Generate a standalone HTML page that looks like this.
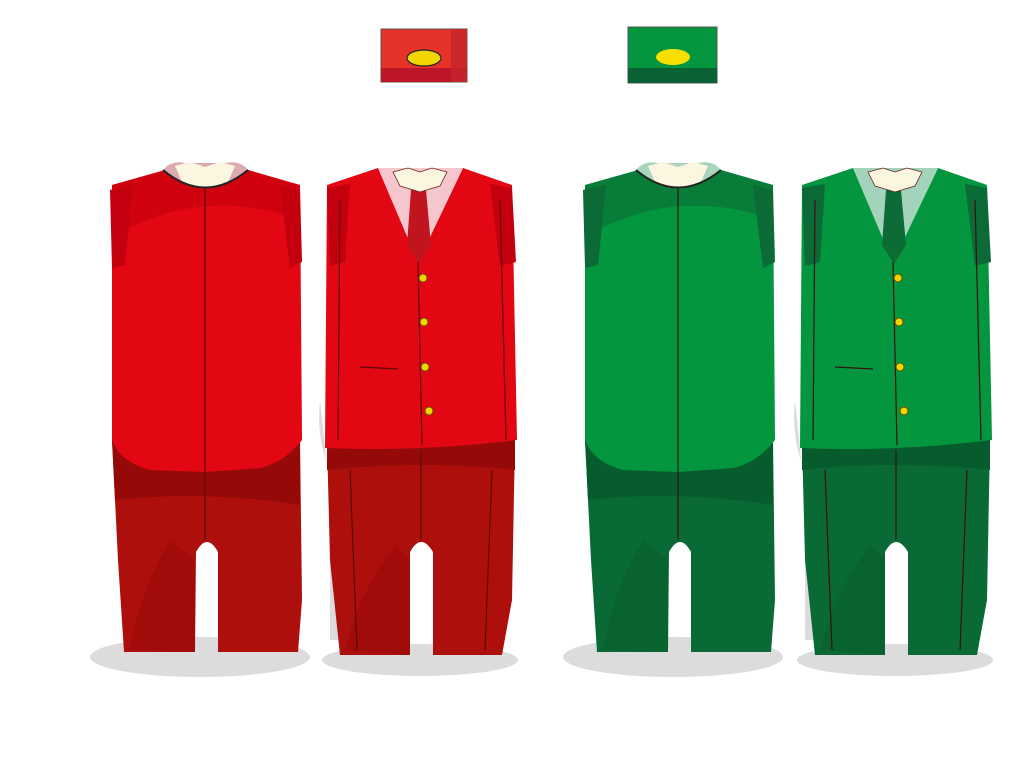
<!DOCTYPE html>
<html><head><meta charset="utf-8"><style>
html,body{margin:0;padding:0;background:#fff;width:1024px;height:768px;overflow:hidden}
svg{display:block}
.red{--b:#e30613;--s:#c4000f;--p:#ad0f0d;--pd:#950a09;--c:#dcaab0;--c2:#f5c6cc;--t:#c0141f;--ln:#5a0a0a}
.grn{--b:#03963f;--s:#0b6a35;--p:#0a6a35;--pd:#075c2d;--c:#a9d5bd;--c2:#a4d3bb;--t:#0d6b36;--ln:#3a1010}
.b{fill:var(--b)}.s{fill:var(--s)}.p{fill:var(--p)}.pd{fill:var(--pd)}.c{fill:var(--c)}.c2{fill:var(--c2)}.t{fill:var(--t)}
.ln{stroke:var(--ln);stroke-width:1.2;fill:none}
</style></head><body>
<svg width="1024" height="768" viewBox="0 0 1024 768">
<!-- flags -->
<rect x="381" y="29" width="86" height="53" fill="#e63329" stroke="#555" stroke-width="1"/>
<rect x="381" y="68" width="86" height="14" fill="#bd1628"/>
<rect x="451" y="29" width="16" height="53" fill="#c6262a" opacity=".8"/>
<ellipse cx="424" cy="58" rx="17" ry="8" fill="#f1d500" stroke="#222" stroke-width="1.2"/>
<rect x="628" y="27" width="89" height="56" fill="#03963f" stroke="#555" stroke-width="1"/>
<rect x="628" y="68" width="89" height="15" fill="#0a6234"/>
<ellipse cx="673" cy="57" rx="17" ry="8" fill="#f7e000"/>

<defs>
<g id="back">
  <ellipse cx="200" cy="657" rx="110" ry="20" fill="#dcdcdc"/>
  <path class="p" d="M112,440 L300,440 L302,600 L298,652 L218,652 L218,552 Q207,532 196,552 L195,652 L124,652 L118,560 Z"/>
  <path class="pd" d="M112,440 L300,440 L300,505 Q205,490 115,500 Z"/>
  <path class="pd" d="M130,650 Q140,590 170,540 L195,560 L195,652 Z" opacity=".5"/>
  <path class="b" d="M112,185 L165,170 Q205,205 248,170 L300,185 L302,440 Q285,462 260,468 L205,472 L150,470 Q120,462 112,440 Z"/>
  <path class="s" d="M112,185 L165,170 Q205,205 248,170 L300,185 L300,220 Q205,185 115,235 Z" opacity=".6"/>
  <path class="s" d="M110,190 L133,185 L125,265 L112,268 Z"/>
  <path class="s" d="M280,185 L300,190 L302,262 L290,268 Z"/>
  <path class="c" d="M163,170 Q172,160 184,163 L226,163 Q240,160 248,170 Q205,205 163,170 Z"/>
  <path fill="#fbf6df" d="M175,166 L190,162 L205,167 L220,162 L235,166 L228,182 Q205,195 182,182 Z"/>
  <path d="M163,170 Q205,205 248,170" stroke="#222" stroke-width="2" fill="none"/>
  <path class="ln" d="M205,188 L205,540"/>
</g>
<g id="front">
  <ellipse cx="420" cy="660" rx="98" ry="16" fill="#dcdcdc"/>
  <path d="M320,400 Q316,440 330,470 L330,640 L345,640 Z" fill="#dcdcdc"/>
  <path class="p" d="M327,440 L515,440 L512,600 L502,655 L433,655 L433,552 Q421,532 410,552 L410,655 L340,655 L330,560 Z"/>
  <path class="pd" d="M327,440 L515,440 L515,470 Q420,460 327,470 Z"/>
  <path class="pd" d="M345,650 Q360,590 395,545 L410,560 L410,655 Z" opacity=".5"/>
  <path class="ln" d="M350,470 L357,650 M492,470 L485,650 M421,450 L421,540"/>
  <path class="b" d="M327,185 L378,168 L418,262 L463,168 L512,185 L517,440 Q420,452 325,448 Z"/>
  <path class="c2" d="M378,168 L463,168 L418,262 Z"/>
  <path class="s" d="M327,188 L350,184 L345,262 L330,266 Z"/>
  <path class="s" d="M490,184 L512,188 L516,262 L500,266 Z"/>
  <path class="t" d="M411,190 L426,190 L431,245 L419,264 L407,245 Z"/>
  <path fill="#fbf6df" stroke="#6b2020" stroke-width="0.8" d="M393,172 L408,168 L420,172 L432,168 L447,172 L440,186 L420,192 L400,186 Z"/>
  <path class="ln" d="M418,262 L422,445 M360,367 L398,369 M340,200 L338,440 M500,200 L506,440"/>
  <g fill="#f1d500" stroke="#6a5000" stroke-width="1">
    <circle cx="423" cy="278" r="4"/><circle cx="424" cy="322" r="4"/>
    <circle cx="425" cy="367" r="4"/><circle cx="429" cy="411" r="4"/>
  </g>
</g>
</defs>
<g class="red"><use href="#back"/><use href="#front"/></g>
<g class="grn"><use href="#back" transform="translate(473,0)"/><use href="#front" transform="translate(475,0)"/></g>
</svg>
</body></html>
